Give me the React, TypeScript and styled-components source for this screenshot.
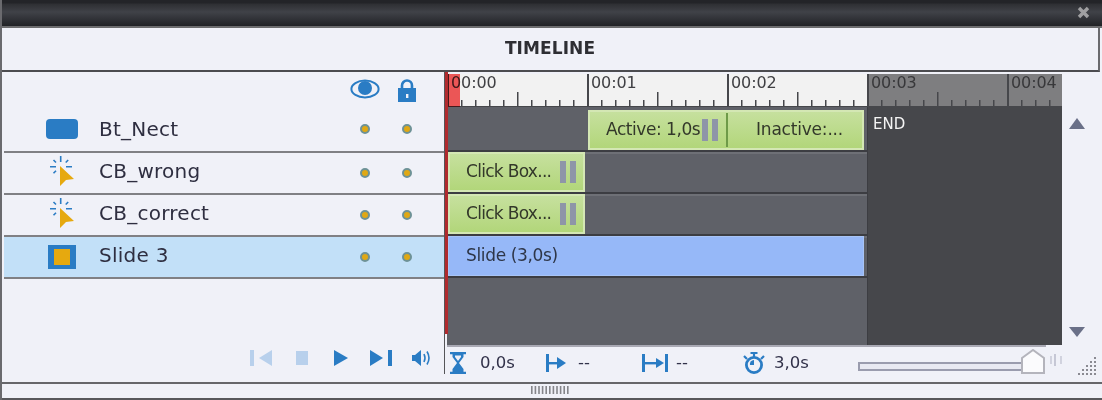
import React from "react";
import styled, { createGlobalStyle } from "styled-components";

const Global = createGlobalStyle`
  html, body { margin: 0; padding: 0; background: #f0f1f8; }
  * { box-sizing: border-box; }
`;

const FONT = `"DejaVu Sans", "Noto Sans", "Liberation Sans", sans-serif`;

const Window = styled.div`
  width: 1102px; height: 400px; display: flex; flex-direction: column;
  background: #f0f1f8; border-left: 2px solid #6a6a6e; font-family: ${FONT}; overflow: hidden;
`;
const TitleBar = styled.div`
  height: 28px; flex: none; display: flex; align-items: center; justify-content: flex-end;
  padding: 0 12px 4px 0;
  margin-left: -2px;
  background: linear-gradient(#232428 0, #232428 3px, #2e2f33 4px, #404248 12px, #212226 26px, #6c6c6e 26px);
`;
const Heading = styled.div`
  height: 44px; flex: none; display: flex; align-items: center; justify-content: center;
  padding-bottom: 2px;
  font-size: 17px; font-weight: 700; color: #2e2e33; letter-spacing: 0.1px;
  border-bottom: 2px solid #4c4c50; border-right: 2px solid #6a6a6e; margin-right: 2px;
`;
const Body = styled.div`flex: 1; display: flex; min-height: 0;`;
const LeftColumn = styled.div`
  width: 442px; flex: none; padding-left: 2px; display: flex; flex-direction: column;
`;
const LayerHeader = styled.div`height: 35px; flex: none; display: flex; justify-content: flex-end; align-items: flex-start; padding: 7px 16px 0 0;`;
const Cell = styled.div`width: 42px; display: flex; align-items: center; justify-content: center;`;
const LayerRow = styled.div<{ $first?: boolean; $selected?: boolean }>`
  height: ${(p) => (p.$first ? 46 : 42)}px; flex: none; display: flex; align-items: center;
  padding: 0 16px 0 42px; border-bottom: 2px solid #808084;
  background: ${(p) => (p.$selected ? "#c2e0f8" : "transparent")};
`;
const IconCell = styled.div`width: 53px; flex: none; display: flex; align-items: center;`;
const Name = styled.div<{ $first?: boolean }>`
  flex: 1; font-size: 20px; line-height: 24px; color: #2e2e40; position: relative;
  top: ${(p) => (p.$first ? 0 : -2)}px; letter-spacing: 0.25px;
`;
const Dot = styled.span`
  width: 10px; height: 10px; border-radius: 50%; background: #e0a814; border: 2px solid #6e9296; display: block;
`;
const ButtonShape = styled.div`width: 32px; height: 20px; border-radius: 4px; background: #2a7cc4;`;
const SlideShape = styled.div`
  width: 28px; height: 24px; background: #e6a90f; border: solid #2a7cc4; border-width: 4px 6px;
  margin-left: 2px;
`;
const ClickSvg = styled.svg`margin: 0 0 4px 4px; display: block;`;
const Controls = styled.div`
  margin-top: auto; display: grid; grid-template-columns: 46px 38px 36px 42px 20px;
  justify-content: end; align-items: center; padding: 0 12px 15px 0;
`;
const RightColumn = styled.div`
  flex: 1; position: relative; padding: 2px 0 0 3px; display: flex; flex-direction: column;
`;
const Divider = styled.div`position: absolute; left: 0; top: 0; width: 1px; height: 302px; background: #555558;`;
const Playhead = styled.div`position: absolute; left: 1px; top: 0; width: 3px; height: 262px; background: #b02a2e;`;
const PlayheadHandle = styled.div`
  position: absolute; left: 4px; top: 2px; width: 12px; height: 33px; background: #f85a5a; mix-blend-mode: multiply;
`;
const Upper = styled.div`display: flex; height: 273px; flex: none;`;
const Timeline = styled.div`width: 615px; flex: none; display: flex; flex-direction: column;`;
const Ruler = styled.div`height: 33px; flex: none; display: flex; overflow-x: clip; border-bottom: 1px solid #46474b;`;
const Second = styled.div<{ $dim?: boolean }>`
  width: 140px; flex: none; position: relative; border-left: 2px solid #46474b;
  background: ${(p) => (p.$dim ? "#7e7e80" : "#f2f2f2")};
  color: ${(p) => (p.$dim ? "#38383a" : "#404044")};
  font-size: 16px; padding: 0 0 0 2px; letter-spacing: -0.1px;
`;
const RulerLabel = styled.span`display: block; line-height: 19px; position: relative; top: -1px;`;
const Ticks = styled.svg`position: absolute; left: -2px; bottom: 0; display: block;`;
const Tracks = styled.div`flex: 1; display: flex; min-height: 0;`;
const TrackStack = styled.div`width: 420px; flex: none; display: flex; flex-direction: column; background: #5f6168;`;
const TrackRow = styled.div<{ $first?: boolean; $inset: number }>`
  height: ${(p) => (p.$first ? 45 : 42)}px; flex: none; display: flex; border-bottom: 2px solid #3c3d42;
  padding: ${(p) => (p.$first ? 3 : 0)}px 0 0 ${(p) => p.$inset}px;
  box-shadow: inset 0 2px 0 ${(p) => (p.$first ? "#5f6168" : "#6e7076")};
`;
const Bar = styled.div<{ $w: number }>`
  width: ${(p) => p.$w}px; height: 40px; display: flex; align-items: center;
  border: 2px solid #d4e7b4; background: linear-gradient(#c6e09e, #b2d67a);
  font-size: 17px; color: #33382a; white-space: nowrap;
`;
const BarSegment = styled.div<{ $w: number; $pad: number; $end: number }>`
  width: ${(p) => p.$w}px; flex: none; height: 34px; display: flex; align-items: center;
  padding: 0 ${(p) => p.$end}px 0 ${(p) => p.$pad}px;
  &:not(:last-child) { border-right: 2px solid #6e9a48; }
`;
const BarLabel = styled.span<{ $spacing: number }>`
  position: relative; top: -1px; letter-spacing: ${(p) => p.$spacing}px;
`;
const Handle = styled.div`
  width: 16px; height: 22px; flex: none; margin-left: auto;
  border-left: 6px solid #8e95a8; border-right: 6px solid #8e95a8;
`;
const SlideBar = styled.div`
  width: 416px; height: 40px; display: flex; align-items: center; padding-left: 17px;
  background: #96b8f8; border: 1px solid #a8c4f6; font-size: 17px; color: #2e3648;
`;
const EmptyTrack = styled.div`flex: 1;`;
const EndZone = styled.div`
  flex: 1; background: #46474b; color: #f4f4f4; font-size: 15px; padding: 8px 0 0 5px; border-left: 1px solid #3c3d42;
`;
const Strip = styled.div`height: 2px; flex: none; width: 599px; background: #a9a9b4;`;
const ScrollColumn = styled.div`
  flex: 1; display: flex; flex-direction: column; align-items: flex-start; padding: 44px 0 10px 7px; justify-content: space-between;
`;
const Status = styled.div`
  flex: 1; display: grid; grid-template-columns: 30px 66px 32px 64px 34px 67px 31px 84px 192px 28px 20px;
  align-items: center; padding: 0 0 3px 3px;
`;
const StatusText = styled.span`font-size: 16.5px; color: #32324a; position: relative; top: -1px;`;
const Slider = styled.div`position: relative; width: 187px; height: 26px; display: flex; align-items: center;`;
const SliderTrack = styled.div`
  width: 165px; height: 9px; margin-top: 6px; border: 2px solid #9a9cae; background: #e8e9f2;
`;
const SliderThumb = styled.svg`position: absolute; right: 0; top: -1px;`;
const ZoomMark = styled.div`display: flex; margin-top: -6px;`;
const GripCell = styled.div`display: flex; margin-top: 8px;`;
const Footer = styled.div`
  height: 18px; flex: none; display: flex; justify-content: center; align-items: flex-start; margin-left: -2px;
  border-top: 2px solid #66666a; border-bottom: 2px solid #58585c; padding: 2px 0 0 0;
`;

const blue = "#2a7cc4";
const pale = "#b8d0ec";

const CloseIcon = () => (
  <svg width="13" height="13" viewBox="0 0 13 13"><path d="M2 2 L11 11 M11 2 L2 11" stroke="#a0a0a2" strokeWidth="3.4" /></svg>
);
const EyeIcon = () => (
  <svg width="30" height="20" viewBox="0 0 30 20">
    <ellipse cx="15" cy="10" rx="13.6" ry="8.4" fill="none" stroke={blue} strokeWidth="2" />
    <circle cx="15" cy="9" r="7" fill={blue} />
  </svg>
);
const LockIcon = () => (
  <svg width="18" height="23" viewBox="0 0 18 23">
    <path d="M4 10 V6.5 a5 5 0 0 1 10 0 V10" fill="none" stroke={blue} strokeWidth="2.6" />
    <rect x="0" y="9" width="18" height="14" fill={blue} />
    <rect x="8" y="15" width="2.4" height="4" fill="#f0f1f8" />
  </svg>
);
const ClickIcon = () => (
  <ClickSvg width="24" height="30" viewBox="0 0 24 30">
    <g stroke={blue} strokeWidth="1.6" fill="none">
      <path d="M10.7 0 V6 M0 10.7 H6 M16 10.7 H22 M3.5 4 L6 6.5 M18.2 4 L15.7 6.5 M6 14.8 L3.5 17.3" />
    </g>
    <path d="M10 10 L24 23 L16 24 L10 30 Z" fill="#e6a90f" />
  </ClickSvg>
);

const PrevIcon = () => (
  <svg width="23" height="16" viewBox="0 0 23 16"><rect width="4" height="16" fill={pale} /><path d="M22 0 V16 L9 8 Z" fill={pale} /></svg>
);
const StopIcon = () => (
  <svg width="12" height="14" viewBox="0 0 12 14"><rect width="12" height="14" fill={pale} /></svg>
);
const PlayIcon = () => (
  <svg width="14" height="16" viewBox="0 0 14 16"><path d="M0 0 L14 8 L0 16 Z" fill={blue} /></svg>
);
const NextIcon = () => (
  <svg width="22" height="16" viewBox="0 0 22 16"><path d="M0 0 L13 8 L0 16 Z" fill={blue} /><rect x="18" width="4" height="16" fill={blue} /></svg>
);
const SoundIcon = () => (
  <svg width="20" height="18" viewBox="0 0 20 18">
    <path d="M0 6 H3 L9 1 V17 L3 12 H0 Z" fill={blue} />
    <path d="M12 5 Q14 9 12 13 M15 2.5 Q19 9 15 15.5" fill="none" stroke={blue} strokeWidth="1.6" />
  </svg>
);
const HourglassIcon = () => (
  <svg width="16" height="22" viewBox="0 0 16 22">
    <path d="M0 1 H16 M0 21 H16" stroke={blue} strokeWidth="2.4" />
    <path d="M2.5 2 H13.5 V5 L9 11 L13.5 17 V20 H2.5 V17 L7 11 L2.5 5 Z M5 3.5 V5 L8 9 L11 5 V3.5 Z" fill={blue} fillRule="evenodd" />
  </svg>
);
const InIcon = () => (
  <svg width="20" height="18" viewBox="0 0 20 18">
    <rect width="3" height="18" fill={blue} />
    <rect x="3" y="8" width="9" height="2.4" fill={blue} />
    <path d="M11 3 L20 9 L11 15 Z" fill={blue} />
  </svg>
);
const OutIcon = () => (
  <svg width="26" height="18" viewBox="0 0 26 18">
    <rect width="3" height="18" fill={blue} />
    <rect x="3" y="8" width="12" height="2.4" fill={blue} />
    <path d="M14 4 L22 9 L14 14 Z" fill={blue} />
    <rect x="23" width="3" height="18" fill={blue} />
  </svg>
);
const WatchIcon = () => (
  <svg width="22" height="22" viewBox="0 0 22 22">
    <circle cx="11" cy="13" r="7.6" fill="none" stroke={blue} strokeWidth="2.8" />
    <path d="M7.5 1 H14.5 M11 1 V6 M1 4 L4 7 M21 4 L18 7" stroke={blue} strokeWidth="2.2" fill="none" />
    <path d="M11 8 V13 H7 A4 4 0 0 1 11 8 Z" fill={blue} />
  </svg>
);
const RulerTicks = () => {
  const xs = [14, 28, 42, 56, 70, 84, 98, 112, 126];
  return (
    <Ticks width="140" height="14" viewBox="0 0 140 14">
      {xs.map((x) => (
        <rect key={x} x={x} y={x === 70 ? 0 : 8} width="1.5" height={x === 70 ? 14 : 6} fill="#46474b" />
      ))}
    </Ticks>
  );
};
const TriangleUp = () => (
  <svg width="16" height="11" viewBox="0 0 16 11"><path d="M8 0 L16 11 H0 Z" fill="#6a7088" /></svg>
);
const TriangleDown = () => (
  <svg width="16" height="10" viewBox="0 0 16 10"><path d="M0 0 H16 L8 10 Z" fill="#6a7088" /></svg>
);
const ZoomHandle = () => (
  <svg width="12" height="14" viewBox="0 0 12 14">
    <path d="M1 3 V11 M11 3 V11" stroke="#c4c6d4" strokeWidth="1.4" />
    <path d="M5 1 V13" stroke="#b4b6c6" strokeWidth="1.4" />
  </svg>
);
const ResizeGrip = () => {
  const dots: [number, number][] = [];
  for (let r = 0; r < 5; r++) for (let c = 4 - r; c < 5; c++) dots.push([c * 4, r * 4]);
  return (
    <svg width="20" height="20" viewBox="0 0 20 20">
      {dots.map(([x, y]) => (
        <rect key={`${x}-${y}`} x={x} y={y} width="2" height="2" fill="#8a8a92" />
      ))}
    </svg>
  );
};
const Grip = () => (
  <svg width="40" height="9" viewBox="0 0 40 9" style={{ display: "block" }}>
    {Array.from({ length: 11 }, (_, i) => (
      <rect key={i} x={i * 3.6} y="0" width="1.6" height="8" fill="#85858a" />
    ))}
  </svg>
);

const layers = [
  { name: "Bt_Nect", icon: <ButtonShape />, first: true },
  { name: "CB_wrong", icon: <ClickIcon /> },
  { name: "CB_correct", icon: <ClickIcon /> },
  { name: "Slide 3", icon: <SlideShape />, selected: true },
];
const seconds = ["00:00", "00:01", "00:02", "00:03", "00:04"];

export default function App() {
  return (
    <Window>
      <Global />
      <TitleBar><CloseIcon /></TitleBar>
      <Heading>TIMELINE</Heading>
      <Body>
        <LeftColumn>
          <LayerHeader>
            <Cell><EyeIcon /></Cell>
            <Cell><LockIcon /></Cell>
          </LayerHeader>
          {layers.map((l) => (
            <LayerRow key={l.name} $first={l.first} $selected={l.selected}>
              <IconCell>{l.icon}</IconCell>
              <Name $first={l.first}>{l.name}</Name>
              <Cell><Dot /></Cell>
              <Cell><Dot /></Cell>
            </LayerRow>
          ))}
          <Controls>
            <PrevIcon /><StopIcon /><PlayIcon /><NextIcon /><SoundIcon />
          </Controls>
        </LeftColumn>
        <RightColumn>
          <Upper>
            <Timeline>
              <Ruler>
                {seconds.map((s, i) => (
                  <Second key={s} $dim={i >= 3}>
                    <RulerLabel>{s}</RulerLabel>
                    <RulerTicks />
                  </Second>
                ))}
              </Ruler>
              <Tracks>
                <TrackStack>
                  <TrackRow $first $inset={141}>
                    <Bar $w={276}>
                      <BarSegment $w={138} $pad={16} $end={8}>
                        <BarLabel $spacing={-0.45}>Active: 1,0s</BarLabel>
                        <Handle />
                      </BarSegment>
                      <BarSegment $w={134} $pad={28} $end={0}>
                        <BarLabel $spacing={-0.2}>Inactive:...</BarLabel>
                      </BarSegment>
                    </Bar>
                  </TrackRow>
                  <TrackRow $inset={1}>
                    <Bar $w={137}>
                      <BarSegment $w={133} $pad={16} $end={7}>
                        <BarLabel $spacing={-0.7}>Click Box...</BarLabel>
                        <Handle />
                      </BarSegment>
                    </Bar>
                  </TrackRow>
                  <TrackRow $inset={1}>
                    <Bar $w={137}>
                      <BarSegment $w={133} $pad={16} $end={7}>
                        <BarLabel $spacing={-0.7}>Click Box...</BarLabel>
                        <Handle />
                      </BarSegment>
                    </Bar>
                  </TrackRow>
                  <TrackRow $inset={1}>
                    <SlideBar><BarLabel $spacing={-0.35}>Slide (3,0s)</BarLabel></SlideBar>
                  </TrackRow>
                  <EmptyTrack />
                </TrackStack>
                <EndZone>END</EndZone>
              </Tracks>
              <Strip />
            </Timeline>
            <ScrollColumn>
              <TriangleUp />
              <TriangleDown />
            </ScrollColumn>
          </Upper>
          <Status>
            <HourglassIcon />
            <StatusText>0,0s</StatusText>
            <InIcon />
            <StatusText>--</StatusText>
            <OutIcon />
            <StatusText>--</StatusText>
            <WatchIcon />
            <StatusText>3,0s</StatusText>
            <Slider>
              <SliderTrack />
              <SliderThumb width="24" height="26" viewBox="0 0 24 26">
                <path d="M1 9 L12 1 L23 9 V24 H1 Z" fill="#fbfbfd" stroke="#b4b4bc" strokeWidth="2" />
              </SliderThumb>
            </Slider>
            <ZoomMark><ZoomHandle /></ZoomMark>
            <GripCell><ResizeGrip /></GripCell>
          </Status>
          <Divider />
          <Playhead />
          <PlayheadHandle />
        </RightColumn>
      </Body>
      <Footer><Grip /></Footer>
    </Window>
  );
}
